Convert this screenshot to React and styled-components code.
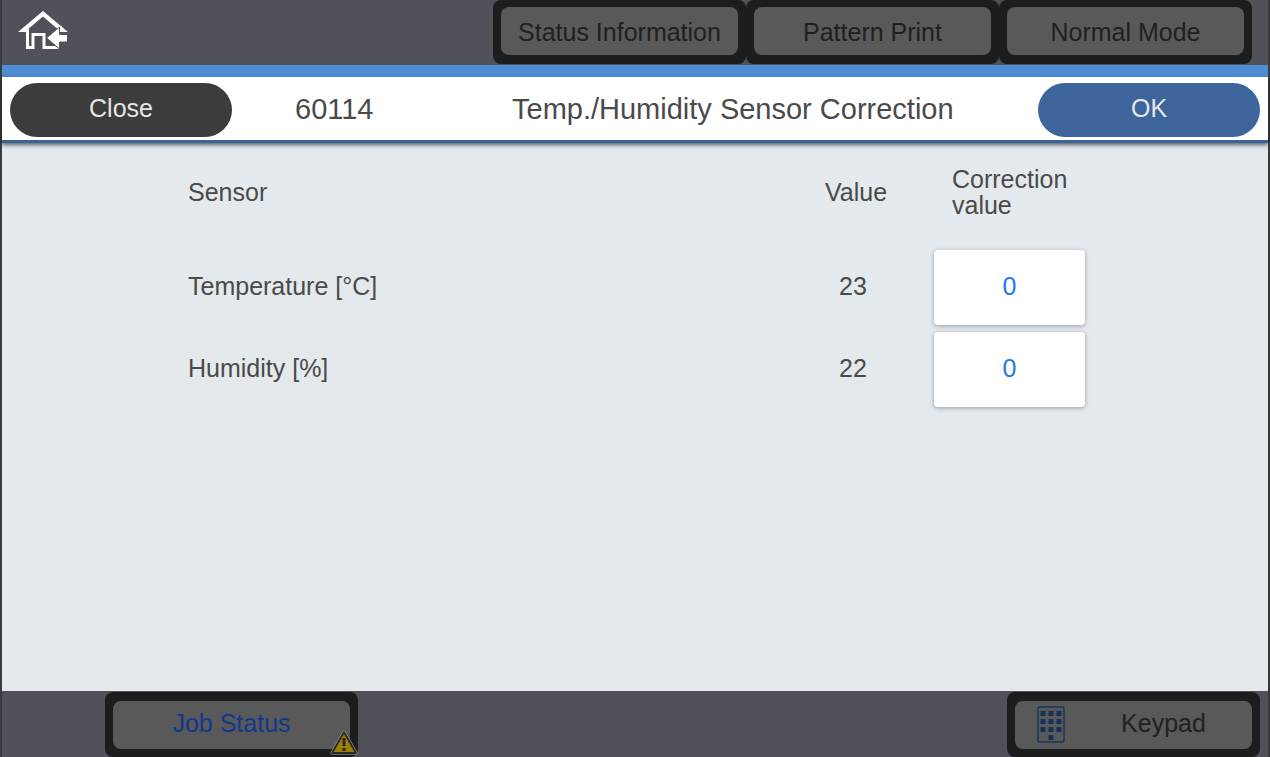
import { useState } from "react";
import styled, { createGlobalStyle } from "styled-components";

const tabs = ["Status Information", "Pattern Print", "Normal Mode"];

const sensors = [
    { id: "temperature", name: "Temperature [°C]", value: 23 },
    { id: "humidity", name: "Humidity [%]", value: 22 },
];

export default function App(){
    const [corrections, setCorrections] = useState({ temperature: "0", humidity: "0" });

    function changeCorrection(id, value){
        setCorrections({ ...corrections, [id]: value });
    }

    return(
        <>
        <GlobalStyle/>
        <Screen>
            <TopBar>
                <HomeButton type="button" aria-label="Home">
                    <HomeIcon/>
                </HomeButton>
                <Tabs>
                    {tabs.map((tab) => (
                        <PanelButton key={tab} type="button">
                            <Face>{tab}</Face>
                        </PanelButton>
                    ))}
                </Tabs>
            </TopBar>
            <Header>
                <PillButton type="button" $color="#3c3c3c">Close</PillButton>
                <Code>60114</Code>
                <Title>Temp./Humidity Sensor Correction</Title>
                <PillButton type="button" $color="#3d659b">OK</PillButton>
            </Header>
            <Content>
                <Table>
                    <thead>
                        <tr>
                            <HeadCell scope="col">Sensor</HeadCell>
                            <HeadCell scope="col" $width="115px" $indent="6px">Value</HeadCell>
                            <HeadCell scope="col" $width="151px" $indent="18px">Correction value</HeadCell>
                        </tr>
                    </thead>
                    <tbody>
                        {sensors.map((sensor) => (
                            <tr key={sensor.id}>
                                <Cell><label htmlFor={sensor.id}>{sensor.name}</label></Cell>
                                <Cell $indent="20px">{sensor.value}</Cell>
                                <Cell $field>
                                    <Correction
                                        id={sensor.id}
                                        type="text"
                                        inputMode="numeric"
                                        value={corrections[sensor.id]}
                                        onChange={(e) => changeCorrection(sensor.id, e.target.value)}
                                    />
                                </Cell>
                            </tr>
                        ))}
                    </tbody>
                </Table>
            </Content>
            <Footer>
                <PanelButton type="button" $bottom>
                    <Face $color="#12388e" $padding="0 0 4px">Job Status</Face>
                    <Badge><WarningIcon/></Badge>
                </PanelButton>
                <PanelButton type="button" $bottom>
                    <Face $align="flex-start" $padding="0 0 2px 22px">
                        <KeypadIcon/>
                        <FaceLabel>Keypad</FaceLabel>
                    </Face>
                </PanelButton>
            </Footer>
        </Screen>
        </>
    );
}

function HomeIcon(){
    return(
        <svg width="50" height="40" viewBox="0 0 50 40" aria-hidden="true">
            <path d="M0 21 L25 0 L50 21 H43 L25 5.5 L9 19 V21 Z" fill="#fff"/>
            <path d="M9.5 18 V36.5 H15 V23.5 H26 V36.5 H40 V33" fill="none" stroke="#fff" strokeWidth="3"/>
            <path d="M42.5 15 V21" stroke="#fff" strokeWidth="2"/>
            <path d="M28.5 27 L41.5 16 V23.5 H49.5 V31 H41.5 V38 Z" fill="#fff" stroke="#515159" strokeWidth="1"/>
        </svg>
    );
}

function WarningIcon(){
    return(
        <svg width="28" height="25" viewBox="0 0 28 25" aria-hidden="true">
            <path d="M14 2 L26 23 H2 Z" fill="none" stroke="#a8a8a8" strokeWidth="3" strokeLinejoin="round"/>
            <path d="M14 2 L26 23 H2 Z" fill="#9c8008" stroke="#2c2a22" strokeWidth="2" strokeLinejoin="round"/>
            <path d="M14 8 V16 M14 18 V21" stroke="#2c2718" strokeWidth="3"/>
        </svg>
    );
}

function KeypadIcon(){
    const dots = [[0, 0], [1, 0], [2, 0], [0, 1], [1, 1], [2, 1], [0, 2], [1, 2], [2, 2], [1, 3]];

    return(
        <svg width="28" height="37" viewBox="0 0 28 37" aria-hidden="true">
            <rect x="1" y="1" width="26" height="35" rx="2" fill="none" stroke="#18365c" strokeWidth="1.5"/>
            {dots.map(([col, row]) => (
                <rect key={`${col}-${row}`} x={3.5 + col * 8} y={5 + row * 8} width="5" height="5" fill="#14305a"/>
            ))}
        </svg>
    );
}

const GlobalStyle = createGlobalStyle`
    * {
        box-sizing: border-box;
    }
    body {
        margin: 0;
        font-family: "Liberation Sans", Arial, sans-serif;
        font-size: 25px;
        line-height: 26px;
        color: #4a4a4a;
    }
    button, input {
        font: inherit;
        border: none;
    }
    button {
        cursor: pointer;
    }
`;
const Screen = styled.div`
    display: flex;
    flex-direction: column;
    min-height: 100vh;
    border: solid #3b3b3d;
    border-width: 0 2px;
    background-color: #e4e9ed;
`;
const TopBar = styled.header`
    display: flex;
    justify-content: space-between;
    align-items: flex-start;
    height: 77px;
    padding: 0 16px;
    background-color: #515159;
    border-bottom: 12px solid #4e8dd2;
`;
const HomeButton = styled.button`
    display: flex;
    margin: 11px 0 0 0;
    padding: 0;
    background: none;
`;
const Tabs = styled.nav`
    display: flex;
`;
const PanelButton = styled.button`
    position: relative;
    width: 253px;
    height: ${({ $bottom }) => ($bottom ? "65px" : "64px")};
    padding: ${({ $bottom }) => ($bottom ? "9px 8px 8px" : "7px 8px 9px")};
    background-color: #1c1d1f;
    border-radius: 8px;
`;
const Face = styled.span`
    display: flex;
    align-items: center;
    justify-content: ${({ $align }) => $align || "center"};
    height: 48px;
    padding: ${({ $padding }) => $padding || "2px 0 0"};
    background-color: #595959;
    border-radius: 8px;
    color: ${({ $color }) => $color || "#202020"};
    white-space: nowrap;
`;
const FaceLabel = styled.span`
    flex: 1;
    padding: 0 0 2px 10px;
`;
const Badge = styled.span`
    position: absolute;
    right: 0;
    bottom: 2px;
    display: flex;
`;
const Header = styled.div`
    display: grid;
    grid-template-columns: 285px 217px 1fr 222px;
    align-items: center;
    height: 66px;
    padding: 2px 8px 0;
    background-color: #fff;
    border-bottom: 3px solid #3a659b;
    box-shadow: 0 2px 4px rgba(0, 0, 0, 0.6);
`;
const PillButton = styled.button`
    width: 222px;
    height: 54px;
    padding: 0 0 4px;
    background-color: ${({ $color }) => $color};
    border-radius: 27px;
    color: #e6e6e6;
`;
const Code = styled.span`
    padding: 0 0 2px;
    font-size: 29px;
`;
const Title = styled.h1`
    margin: 0;
    padding: 0 0 2px;
    font-size: 29px;
    font-weight: 400;
    white-space: nowrap;
`;
const Content = styled.main`
    flex: 1;
    padding: 0 183px 0 186px;
`;
const Table = styled.table`
    width: 100%;
    border-collapse: collapse;
    table-layout: fixed;
`;
const HeadCell = styled.th`
    width: ${({ $width }) => $width || "auto"};
    height: 103px;
    padding: 0 0 6px ${({ $indent }) => $indent || "0"};
    font-weight: 400;
    text-align: left;
`;
const Cell = styled.td`
    height: 82px;
    padding: 0 0 ${({ $field }) => ($field ? "0" : "2px")} ${({ $indent }) => $indent || "0"};
`;
const Correction = styled.input`
    display: block;
    width: 100%;
    height: 75px;
    padding: 0 0 2px;
    background-color: #fff;
    border-radius: 4px;
    box-shadow: 0 1px 4px rgba(0, 0, 0, 0.35);
    color: #2474f4;
    text-align: center;
`;
const Footer = styled.footer`
    display: flex;
    justify-content: space-between;
    height: 66px;
    padding: 1px 8px 0 103px;
    background-color: #515159;
`;
